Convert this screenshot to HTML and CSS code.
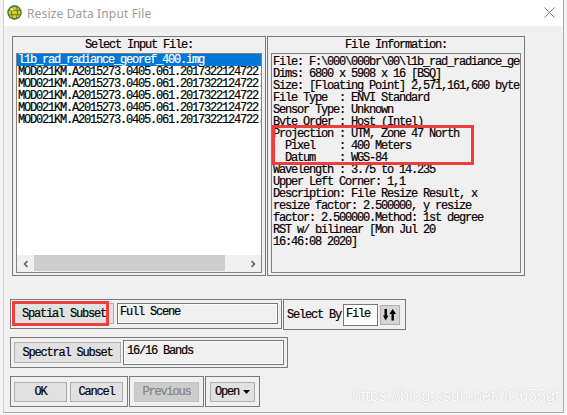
FILE: index.html
```html
<!DOCTYPE html>
<html>
<head>
<meta charset="utf-8">
<title>Resize Data Input File</title>
<link rel="stylesheet" href="styles.css">
</head>
<body>
<div class="window">
  <div class="titlebar">
    <svg class="app-icon" viewBox="0 0 15 15" width="15" height="15">
      <circle cx="7.5" cy="7.5" r="6.6" fill="#e9c62b" stroke="#2c6a28" stroke-width="1.2"/>
      <ellipse cx="7.5" cy="7.5" rx="3" ry="6.4" fill="none" stroke="#3f8c30" stroke-width="1.1"/>
      <path d="M1.5 5.3h12M1.5 9.7h12" stroke="#3f8c30" stroke-width="1.1"/>
      <circle cx="5" cy="4.5" r="1.3" fill="#fff3a8"/>
    </svg>
    <span class="title">Resize Data Input File</span>
    <svg class="close" viewBox="0 0 11 11" width="11" height="11">
      <path d="M0.5 0.5L10.5 10.5M10.5 0.5L0.5 10.5" stroke="#7d7d7d" stroke-width="1"/>
    </svg>
  </div>

  <div class="top mono">
    <div class="panel panel-left">
      <div class="panel-label">Select Input File:</div>
      <div class="listbox">
        <div class="items">
          <div class="item sel">l1b_rad_radiance_georef_400.img</div>
          <div class="item">MOD021KM.A2015273.0405.061.2017322124722.hdf</div>
          <div class="item">MOD021KM.A2015273.0405.061.2017322124722.hdf</div>
          <div class="item">MOD021KM.A2015273.0405.061.2017322124722.hdf</div>
          <div class="item">MOD021KM.A2015273.0405.061.2017322124722.hdf</div>
          <div class="item">MOD021KM.A2015273.0405.061.2017322124722.hdf</div>
        </div>
        <div class="hscroll">
          <div class="sb-btn">
            <svg viewBox="0 0 8 8" width="8" height="8"><path d="M5.5 1L2.5 4L5.5 7" fill="none" stroke="#606060" stroke-width="1.6"/></svg>
          </div>
          <div class="sb-track"><div class="sb-thumb"></div></div>
          <div class="sb-btn">
            <svg viewBox="0 0 8 8" width="8" height="8"><path d="M2.5 1L5.5 4L2.5 7" fill="none" stroke="#606060" stroke-width="1.6"/></svg>
          </div>
        </div>
      </div>
    </div>
    <div class="panel panel-right">
      <div class="panel-label">File Information:</div>
<pre class="infobox">File: F:\000\000br\00\l1b_rad_radiance_georef_400.img
Dims: 6800 x 5908 x 16 [BSQ]
Size: [Floating Point] 2,571,161,600 bytes.
File Type  : ENVI Standard
Sensor Type: Unknown
Byte Order : Host (Intel)
Projection : UTM, Zone 47 North
  Pixel    : 400 Meters
  Datum    : WGS-84
Wavelength : 3.75 to 14.235
Upper Left Corner: 1,1
Description: File Resize Result, x
resize factor: 2.500000, y resize
factor: 2.500000.Method: 1st degree
RST w/ bilinear [Mon Jul 20
16:46:08 2020]</pre>
    </div>
  </div>

  <div class="row row1 mono">
    <div class="frame f-spatial">
      <button class="btn b-spatial">Spatial Subset</button>
      <div class="field f-full">Full Scene</div>
    </div>
    <div class="frame f-select">
      <span class="sel-label">Select By</span>
      <div class="field f-file">File</div>
      <button class="btn b-arrows">
        <svg viewBox="0 0 14 12" width="14" height="12">
          <rect x="1.5" y="0" width="2.4" height="7" fill="#000"/>
          <path d="M0 6.5H5.4L2.7 11.5Z" fill="#000"/>
          <path d="M6.4 5H13L9.7 0Z" fill="#000"/>
          <rect x="8.5" y="4.5" width="2.4" height="7" fill="#000"/>
        </svg>
      </button>
    </div>
  </div>

  <div class="row row2 mono">
    <div class="frame f-spectral">
      <button class="btn b-spectral">Spectral Subset</button>
      <div class="field f-bands">16/16 Bands</div>
    </div>
  </div>

  <div class="row row3 mono">
    <div class="frame f-ok">
      <button class="btn b-ok">OK</button>
      <button class="btn b-ok">Cancel</button>
    </div>
    <div class="frame f-prev">
      <button class="btn b-prev" disabled>Previous</button>
    </div>
    <div class="frame f-open">
      <button class="btn b-open">Open<svg class="caret" viewBox="0 0 7 4" width="7" height="4"><path d="M0 0H7L3.5 4Z" fill="#000"/></svg></button>
    </div>
  </div>

  <div class="mark mark-info"></div>
  <div class="mark mark-spatial"></div>
  <div class="watermark">https://blog.csdn.net/JC655gf</div>
</div>
</body>
</html>
```
FILE: styles.css
```css
* { box-sizing: border-box; }
html, body { margin: 0; padding: 0; }
body {
  background: #f4f4f4;
  width: 567px;
  height: 415px;
  overflow: hidden;
}
.window {
  position: relative;
  margin-left: 3px;
  width: 561px;
  height: 413px;
  border-left: 1px solid #cfcfcf;
  border-right: 1px solid #a9a9a9;
  border-bottom: 1px solid #a9a9a9;
  background: #f0f0f0;
  display: flex;
  flex-direction: column;
}
.titlebar {
  height: 26px;
  flex-shrink: 0;
  background: #fff;
  display: flex;
  align-items: center;
  padding-left: 3px;
}
.app-icon { margin-top: -1px; flex-shrink: 0; }
.title {
  margin-left: 5px;
  font-family: "Noto Sans", "Liberation Sans", sans-serif;
  font-size: 12px;
  letter-spacing: 0.15px;
  color: #9b9b9b;
}
.close { margin-left: auto; margin-right: 8px; margin-top: -1px; }

.mono {
  font-family: "Liberation Mono", monospace;
  font-size: 12px;
  line-height: 12px;
  letter-spacing: -1.2px;
  color: #000;
  -webkit-text-stroke: 0.2px currentColor;
}

.top {
  display: flex;
  gap: 1px;
  margin: 10px 0 0 8px;
  flex-shrink: 0;
}
.panel {
  border: 1px solid #7a7a7a;
  height: 240px;
  padding: 0 3px 2px;
  display: flex;
  flex-direction: column;
}
.panel-left { width: 254px; }
.panel-right { width: 258px; }
.panel-label {
  height: 16px;
  line-height: 16px;
  text-align: center;
}
.listbox {
  height: 220px;
  border: 1px solid #828282;
  background: #fff;
  display: flex;
  flex-direction: column;
}
.items { flex: 1; overflow: hidden; }
.item {
  height: 12px;
  padding-left: 1px;
  white-space: pre;
  overflow: hidden;
}
.item.sel { background: #0078d7; color: #fff; }
.hscroll {
  height: 17px;
  display: flex;
  background: #f0f0f0;
  flex-shrink: 0;
}
.sb-btn {
  width: 17px;
  display: flex;
  align-items: center;
  justify-content: center;
}
.sb-track { flex: 1; }
.sb-thumb {
  width: 191px;
  height: 16px;
  background: #cdcdcd;
}
.infobox {
  margin: 0;
  height: 220px;
  border: 1px solid #828282;
  background: #f0f0f0;
  padding: 2px 0 0 1px;
  overflow: hidden;
  white-space: pre;
  font: inherit;
  letter-spacing: inherit;
}

.row {
  display: flex;
  gap: 1px;
  margin-left: 6px;
  align-items: flex-start;
  flex-shrink: 0;
}
.row1 { margin-top: 23px; }
.row2 { margin-top: 7px; }
.row3 { margin-top: 8px; }

.frame {
  border: 1px solid #7a7a7a;
  display: flex;
  align-items: center;
}
.f-spatial {
  width: 272px;
  height: 30px;
  padding: 3px 3px 0;
  gap: 3px;
  align-items: flex-start;
}
.f-select {
  width: 123px;
  height: 31px;
  padding: 0 5px 0 3px;
}
.sel-label { width: 54px; white-space: pre; }
.f-spectral {
  width: 278px;
  height: 31px;
  padding: 0 3px;
  gap: 2px;
}
.f-ok {
  width: 118px;
  height: 31px;
  padding: 0 4px 0 3px;
  gap: 3px;
}
.f-prev { width: 75px; height: 31px; padding: 0 4px; }
.f-open { width: 55px; height: 31px; padding: 0 4px; }

.btn {
  font: inherit;
  letter-spacing: inherit;
  color: #000;
  background: #e1e1e1;
  border: 1px solid #adadad;
  padding: 0;
  margin: 0;
  display: flex;
  align-items: center;
  justify-content: center;
  white-space: pre;
  flex-shrink: 0;
}
.b-spatial { width: 100px; height: 21px; }
.b-spectral { width: 107px; height: 21px; }
.b-ok { width: 53px; height: 20px; }
.b-prev {
  width: 65px;
  height: 20px;
  background: #cccccc;
  border-color: #bfbfbf;
  color: #838383;
}
.b-open { width: 45px; height: 20px; }
.caret { margin-left: 4px; }
.b-arrows {
  width: 20px;
  height: 20px;
  margin-left: 2px;
  background: #d4d4d4;
  border-color: #b0b0b0;
}

.field {
  border: 1px solid #787878;
  box-shadow: inset 1px 1px 0 #fdfdfd, inset -1px -1px 0 #fdfdfd;
  white-space: pre;
  overflow: hidden;
  flex-shrink: 0;
}
.f-full {
  width: 161px;
  height: 21px;
  padding: 2px 0 0 2px;
  background: #f0f0f0;
}
.f-file {
  width: 35px;
  height: 22px;
  margin-left: 2px;
  padding: 3px 0 0 2px;
  background: #fff;
}
.f-bands {
  width: 161px;
  height: 25px;
  padding: 4px 0 0 3px;
  background: #f0f0f0;
}

.mark {
  position: absolute;
  border: 3px solid #f03c3c;
}
.mark-info { left: 268px; top: 125px; width: 202px; height: 40px; }
.mark-spatial { left: 8px; top: 301px; width: 97px; height: 25px; }

.watermark {
  position: absolute;
  left: 348px;
  top: 388px;
  font-family: "Liberation Sans", Arial, sans-serif;
  font-size: 16px;
  line-height: 16px;
  color: #ffffff;
  text-shadow: 0 0 1px rgba(0, 0, 0, 0.3);
  white-space: pre;
}
```
